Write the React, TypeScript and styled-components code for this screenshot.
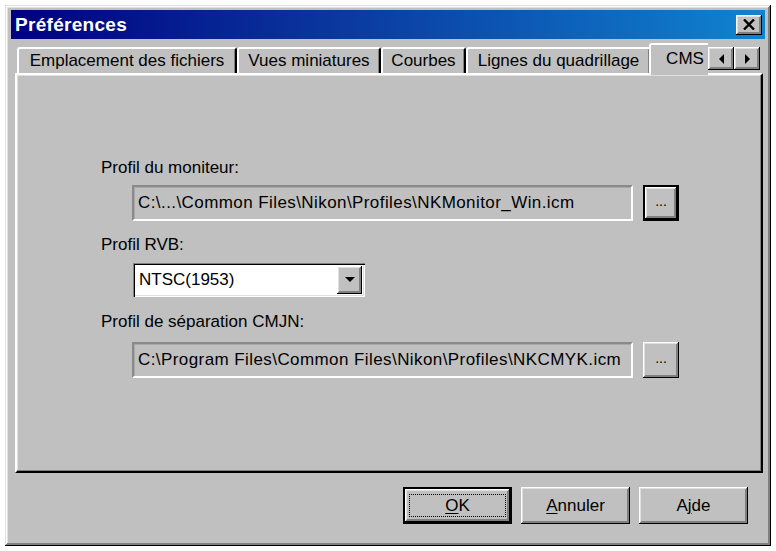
import React from "react";
import styled, { createGlobalStyle, css } from "styled-components";

const GlobalStyle = createGlobalStyle`
  html, body {
    margin: 0;
    padding: 0;
    background: #ffffff;
  }
  body {
    font-family: "Liberation Sans", Arial, sans-serif;
    font-size: 17px;
    color: #000;
  }
`;

const raised = css`
  background: #c0c0c0;
  box-shadow: inset -1px -1px #000, inset 1px 1px #fff, inset -2px -2px #808080,
    inset 2px 2px #dfdfdf, inset -3px -3px #808080;
`;

const Window = styled.div`
  margin: 5px 0 0 5px;
  width: 766px;
  height: 541px;
  box-sizing: border-box;
  background: #c0c0c0;
  box-shadow: inset -1px -1px #000, inset 1px 1px #dfdfdf, inset -2px -2px #808080,
    inset 2px 2px #fff, inset -3px -3px #808080, inset 3px 3px #dfdfdf;
  padding: 5px 6px 0 6px;
  display: flex;
  flex-direction: column;
`;

const TitleBar = styled.div`
  height: 29px;
  background: linear-gradient(90deg, #000080 0%, #0a3aa0 45%, #1084d0 100%);
  display: flex;
  align-items: center;
  justify-content: space-between;
  padding: 0 3px 0 4px;
`;

const Title = styled.span`
  color: #fff;
  font-weight: bold;
  font-size: 19px;
  letter-spacing: 0.3px;
`;

const CloseButton = styled.button`
  ${raised};
  border: none;
  width: 26px;
  height: 20px;
  padding: 0;
  display: flex;
  align-items: center;
  justify-content: center;
`;

const Body = styled.div`
  padding: 0 2px 0 4px;
  display: flex;
  flex-direction: column;
`;

const TabStrip = styled.div`
  height: 36px;
  display: flex;
  align-items: flex-end;
  padding: 0 3px 0 2px;
  position: relative;
  z-index: 1;
  margin-bottom: -2px;
`;

const Tabs = styled.div`
  flex: 1;
  display: flex;
  align-items: flex-end;
  overflow: hidden;
  height: 36px;
`;

const Tab = styled.div<{ $active?: boolean; $width: number }>`
  flex: none;
  box-sizing: border-box;
  width: ${(p) => p.$width}px;
  height: ${(p) => (p.$active ? 32 : 26)}px;
  margin: ${(p) => (p.$active ? "0 -2px 0 -2px" : "0 0 2px 0")};
  background: #c0c0c0;
  border-top: 2px solid #fff;
  border-left: 2px solid #fff;
  border-right: 2px solid #000;
  border-radius: 3px 3px 0 0;
  box-shadow: inset -1px 0 #808080;
  display: flex;
  align-items: center;
  justify-content: center;
  white-space: nowrap;
  padding-bottom: ${(p) => (p.$active ? 2 : 0)}px;
  position: relative;
  z-index: ${(p) => (p.$active ? 2 : 0)};
`;

const Arrows = styled.div`
  display: flex;
  margin-bottom: 5px;
`;

const ArrowButton = styled.div`
  ${raised};
  width: 26px;
  height: 23px;
  display: flex;
  align-items: center;
  justify-content: center;
`;

const Panel = styled.div`
  height: 400px;
  box-sizing: border-box;
  background: #c0c0c0;
  border-top: 2px solid #fff;
  border-left: 2px solid #fff;
  border-right: 2px solid #000;
  border-bottom: 2px solid #000;
  box-shadow: inset -1px -1px #808080, inset 1px 1px #dfdfdf;
  padding: 83px 0 0 84px;
  display: flex;
  flex-direction: column;
`;

const Label = styled.div<{ $top: number }>`
  line-height: 20px;
  margin-top: ${(p) => p.$top}px;
`;

const FieldRow = styled.div<{ $top: number }>`
  display: flex;
  align-items: center;
  gap: 10px;
  margin-top: ${(p) => p.$top}px;
  margin-left: 31px;
`;

const ReadOnlyField = styled.div`
  width: 501px;
  height: 36px;
  box-sizing: border-box;
  border: 2px solid;
  border-color: #8a8a8a #fff #fff #8a8a8a;
  box-shadow: inset 1px 1px #a8a8a8;
  padding: 0 4px;
  display: flex;
  align-items: center;
  white-space: nowrap;
  overflow: hidden;
  letter-spacing: 0.42px;
`;

const SmallButton = styled.div<{ $focused?: boolean }>`
  ${raised};
  width: 36px;
  height: 36px;
  box-sizing: border-box;
  display: flex;
  align-items: center;
  justify-content: center;
  font-size: 14px;
  padding-bottom: 4px;
  ${(p) =>
    p.$focused &&
    css`
      border: 2px solid #000;
    `}
`;

const Combo = styled.div`
  margin-top: 8px;
  margin-left: 32px;
  width: 232px;
  height: 34px;
  box-sizing: border-box;
  background: #fff;
  box-shadow: inset 1px 1px #808080, inset 2px 2px #000, inset -1px -1px #fff,
    inset -2px -2px #dfdfdf;
  padding: 2px 3px 2px 6px;
  display: flex;
  align-items: center;
  justify-content: space-between;
`;

const ComboButton = styled.div`
  ${raised};
  width: 25px;
  height: 28px;
  display: flex;
  align-items: center;
  justify-content: center;
`;

const ButtonRow = styled.div`
  display: flex;
  justify-content: flex-end;
  gap: 9px;
  margin-top: 14px;
  padding-right: 17px;
`;

const DialogButton = styled.div<{ $default?: boolean }>`
  ${raised};
  width: 109px;
  height: 37px;
  box-sizing: border-box;
  display: flex;
  align-items: center;
  justify-content: center;
  ${(p) =>
    p.$default &&
    css`
      border: 2px solid #000;
    `}
`;

const FocusRing = styled.span`
  display: flex;
  align-items: center;
  justify-content: center;
  width: 97px;
  height: 23px;
  border: 1px dotted #000;
  box-sizing: border-box;
`;

const Key = styled.u`
  text-decoration-thickness: 1px;
  text-underline-offset: 2px;
`;

const Triangle = ({ dir }: { dir: "left" | "right" | "down" }) => {
  const pts =
    dir === "left" ? "5,0 5,10 0,5" : dir === "right" ? "0,0 0,10 5,5" : "0,0 10,0 5,5";
  const w = dir === "down" ? 10 : 5;
  const h = dir === "down" ? 6 : 10;
  return (
    <svg width={w} height={h} viewBox={`0 0 ${w} ${h}`}>
      <polygon points={pts} fill="#000" />
    </svg>
  );
};

const CloseGlyph = () => (
  <svg width="12" height="11" viewBox="0 0 12 11">
    <path d="M1 0.5 L11 10.5 M11 0.5 L1 10.5" stroke="#000" strokeWidth="2.4" />
  </svg>
);

const tabs = [
  { label: "Emplacement des fichiers", width: 220 },
  { label: "Vues miniatures", width: 144 },
  { label: "Courbes", width: 85 },
  { label: "Lignes du quadrillage", width: 185 },
];

export default function App() {
  return (
    <>
      <GlobalStyle />
      <Window>
        <TitleBar>
          <Title>Préférences</Title>
          <CloseButton>
            <CloseGlyph />
          </CloseButton>
        </TitleBar>
        <Body>
          <TabStrip>
            <Tabs>
              {tabs.map((t) => (
                <Tab key={t.label} $width={t.width}>
                  {t.label}
                </Tab>
              ))}
              <Tab $active $width={72}>
                CMS
              </Tab>
            </Tabs>
            <Arrows>
              <ArrowButton>
                <Triangle dir="left" />
              </ArrowButton>
              <ArrowButton>
                <Triangle dir="right" />
              </ArrowButton>
            </Arrows>
          </TabStrip>
          <Panel>
            <Label $top={0}>Profil du moniteur:</Label>
            <FieldRow $top={7}>
              <ReadOnlyField>C:\...\Common Files\Nikon\Profiles\NKMonitor_Win.icm</ReadOnlyField>
              <SmallButton $focused>...</SmallButton>
            </FieldRow>
            <Label $top={14}>Profil RVB:</Label>
            <Combo>
              <span>NTSC(1953)</span>
              <ComboButton>
                <Triangle dir="down" />
              </ComboButton>
            </Combo>
            <Label $top={15}>Profil de séparation CMJN:</Label>
            <FieldRow $top={10}>
              <ReadOnlyField>C:\Program Files\Common Files\Nikon\Profiles\NKCMYK.icm</ReadOnlyField>
              <SmallButton>...</SmallButton>
            </FieldRow>
          </Panel>
        </Body>
        <ButtonRow>
          <DialogButton $default>
            <FocusRing>
              <Key>O</Key>K
            </FocusRing>
          </DialogButton>
          <DialogButton>
            <span>
              <Key>A</Key>nnuler
            </span>
          </DialogButton>
          <DialogButton>
            <span>
              A<Key>j</Key>de
            </span>
          </DialogButton>
        </ButtonRow>
      </Window>
    </>
  );
}
